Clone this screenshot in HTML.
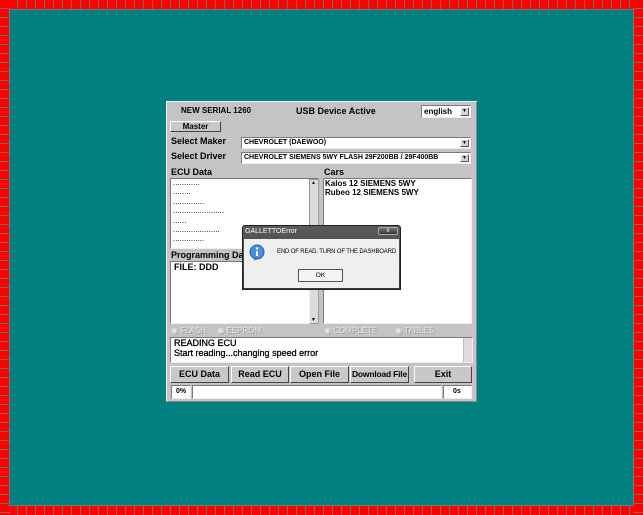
<!DOCTYPE html>
<html><head><meta charset="utf-8"><style>
*{margin:0;padding:0;box-sizing:border-box}
body{width:643px;height:515px;overflow:hidden;position:relative;font-family:"Liberation Sans",Arial,sans-serif;background:#008080;}
.h{position:absolute;left:0;width:643px;height:10px;background:repeating-linear-gradient(90deg,#f00 0 8px,#7a6a6a 8px 9px)}
.v{position:absolute;top:0;width:10px;height:515px;background:repeating-linear-gradient(180deg,#f00 0 8px,#7a6a6a 8px 9px)}
.a{position:absolute;font-size:8px;font-weight:bold;color:#000;white-space:nowrap}
.win{position:absolute;left:166px;top:101px;width:311px;height:301px;background:#c4c4c4;border:1px solid #888;border-top-color:#fff;border-left-color:#fff}
.in{position:absolute;background:#fff;border:1px solid #7a7a7a;border-right-color:#eee;border-bottom-color:#eee}
.btn{position:absolute;background:#c8c8c8;border:1px solid;border-color:#fff #444 #444 #fff;font-size:9px;font-weight:bold;text-align:center;line-height:15px;color:#000;white-space:nowrap;overflow:hidden}
.dd{position:absolute;right:1px;top:1px;width:9px;bottom:1px;background:#d4d4d4;border:1px solid;border-color:#fff #555 #555 #fff;font-size:5px;text-align:center;line-height:7px}
.sb{position:absolute;background:#dcdcdc;border-left:1px solid #bbb}
.g{color:#e8e8e8;font-weight:normal;text-shadow:1px 1px 0 #999}
</style></head><body>
<div class="h" style="top:0"></div>
<div class="h" style="bottom:0"></div>
<div class="v" style="left:0"></div>
<div class="v" style="right:0"></div>
<div style="position:absolute;left:9px;top:9px;width:625px;height:497px;border:1px solid #6a7a7a"></div>
<div class="win"></div>
<div class="a" style="left:181px;top:106px">NEW SERIAL 1260</div>
<div class="a" style="left:296px;top:106px;font-size:9px">USB Device Active</div>
<div class="in" style="left:421px;top:105px;width:50px;height:13px"><span class="a" style="left:2px;top:1px">english</span><div class="dd">▼</div></div>
<div class="btn" style="left:170px;top:121px;width:51px;height:11px;line-height:9px;font-size:8px">Master</div>
<div class="a" style="left:171px;top:136px;font-size:9px">Select Maker</div>
<div class="in" style="left:241px;top:137px;width:230px;height:12px"><span class="a" style="left:2px;top:1px;font-size:7px">CHEVROLET (DAEWOO)</span><div class="dd">▼</div></div>
<div class="a" style="left:171px;top:151px;font-size:9px">Select Driver</div>
<div class="in" style="left:241px;top:152px;width:230px;height:12px"><span class="a" style="left:2px;top:1px;font-size:7px">CHEVROLET SIEMENS 5WY FLASH 29F200BB / 29F400BB</span><div class="dd">▼</div></div>
<div class="a" style="left:171px;top:167px;font-size:9px">ECU Data</div>
<div class="a" style="left:324px;top:167px;font-size:9px">Cars</div>
<div class="in" style="left:170px;top:178px;width:149px;height:71px"></div>
<div class="a" style="left:173px;top:178px;line-height:9.4px;font-weight:normal;font-size:8px">............<br>........<br>..............<br>.......................<br>......<br>.....................<br>..............</div>
<div class="sb" style="left:309px;top:179px;width:10px;height:145px;border:1px solid #999"></div>
<div class="a" style="left:311px;top:180px;font-size:5px">▲</div>
<div class="a" style="left:311px;top:317px;font-size:5px">▼</div>
<div class="in" style="left:323px;top:178px;width:149px;height:146px"></div>
<div class="a" style="left:325px;top:179px;line-height:9px">Kalos 12 SIEMENS 5WY<br>Rubeo 12 SIEMENS 5WY</div>
<div class="a" style="left:171px;top:250px;font-size:9px">Programming Data</div>
<div class="in" style="left:170px;top:261px;width:140px;height:63px"></div>
<div class="a" style="left:174px;top:262px;font-size:9px">FILE: DDD</div>
<div class="a g" style="left:171px;top:326px">◉ FLASH &nbsp;&nbsp;&nbsp; ◉ EEPROM</div>
<div class="a g" style="left:324px;top:326px">◉ COMPLETE &nbsp;&nbsp;&nbsp;&nbsp;&nbsp;&nbsp; ◉ TABLES</div>
<div class="in" style="left:170px;top:337px;width:303px;height:26px"></div>
<div class="a" style="left:174px;top:338px;font-size:9px;font-weight:normal;line-height:10px;-webkit-text-stroke:0.3px #000">READING ECU<br>Start reading...changing speed error</div>
<div class="sb" style="left:463px;top:338px;width:9px;height:24px"></div>
<div class="btn" style="left:170px;top:366px;width:59px;height:17px">ECU Data</div>
<div class="btn" style="left:231px;top:366px;width:58px;height:17px">Read ECU</div>
<div class="btn" style="left:290px;top:366px;width:59px;height:17px">Open File</div>
<div class="btn" style="left:350px;top:366px;width:59px;height:17px;font-size:8.5px;letter-spacing:-0.2px">Download File</div>
<div class="btn" style="left:414px;top:366px;width:58px;height:17px">Exit</div>
<div class="in" style="left:171px;top:385px;width:20px;height:14px"><span class="a" style="left:4px;top:2px;font-size:7px">0%</span></div>
<div class="in" style="left:192px;top:385px;width:250px;height:14px"></div>
<div class="in" style="left:443px;top:385px;width:29px;height:14px"><span class="a" style="left:9px;top:2px;font-size:7px">0s</span></div>
<div style="position:absolute;left:242px;top:225px;width:159px;height:65px;background:linear-gradient(#5a5a5a,#3a3a3a);border:1px solid #222;border-radius:3px 3px 0 0"></div>
<div class="a" style="left:245px;top:228px;color:#fff;font-weight:normal;font-size:7px">GALLETTOError</div>
<div style="position:absolute;left:378px;top:227px;width:20px;height:8px;background:linear-gradient(#777,#333);border:1px solid #aaa;border-radius:2px;color:#fff;font-size:6px;text-align:center;line-height:6px">x</div>
<div style="position:absolute;left:244px;top:239px;width:155px;height:49px;background:#efefef"></div>
<svg style="position:absolute;left:249px;top:244px" width="16" height="18"><circle cx="8" cy="8" r="7" fill="#4a8fd8" stroke="#1f5fae"/><path d="M6 14l-1 3 4-3z" fill="#1f5fae"/><circle cx="8" cy="4.5" r="1.2" fill="#fff"/><rect x="7" y="7" width="2" height="5" fill="#fff"/></svg>
<div class="a" style="left:277px;top:249px;font-weight:normal;font-size:6px;letter-spacing:-0.15px">END OF READ. TURN OF THE DASHBOARD</div>
<div style="position:absolute;left:298px;top:269px;width:45px;height:13px;border:1px solid #555;background:#f4f4f4;font-size:6.5px;text-align:center;line-height:11px">OK</div>
</body></html>
